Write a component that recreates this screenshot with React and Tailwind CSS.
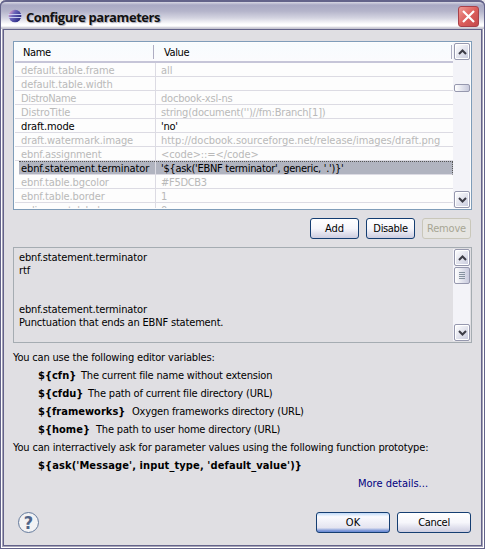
import React from "react";

const rows = [
  ["default.table.frame", "all", "tracking-[-0.1px]"],
  ["default.table.width", "", "tracking-[-0.1px]"],
  ["DistroName", "docbook-xsl-ns", "tracking-[-0.35px]", "tracking-[-0.2px]"],
  ["DistroTitle", "string(document('')//fm:Branch[1])", "tracking-[-0.1px]", "tracking-[-0.2px]"],
  ["draft.mode", "'no'", "tracking-[-0.12px]", "tracking-[-0.3px]", "on"],
  ["draft.watermark.image", "http://docbook.sourceforge.net/release/images/draft.png", "tracking-[-0.1px]", "tracking-[-0.03px]"],
  ["ebnf.assignment", "<code>::=</code>", "tracking-[-0.1px]", "tracking-[-0.1px]"],
  ["ebnf.statement.terminator", "'${ask('EBNF terminator', generic, '.')}'", "tracking-[-0.12px]", "tracking-[-0.29px]", "selected"],
  ["ebnf.table.bgcolor", "#F5DCB3", "tracking-[-0.1px]", "tracking-[-0.3px]"],
  ["ebnf.table.border", "1", "tracking-[-0.1px]"],
  ["eclipse.autolabel", "0", "tracking-[-0.3px]"],
];

const variables = [
  ["${cfn}", "The current file name without extension", "w-[43px]"],
  ["${cfdu}", "The path of current file directory (URL)", "w-[50px]"],
  ["${frameworks}", "Oxygen frameworks directory (URL)", "w-[94px]"],
  ["${home}", "The path to user home directory (URL)", "w-[58px]"],
];

function EclipseIcon() {
  return (
    <svg className="h-[14px] w-[14px]" viewBox="0 0 14 14">
      <defs>
        <linearGradient id="ecl" x1="0" x2="1" y1="0.1" y2="0.7">
          <stop offset="0" stopColor="#f0a8cc" />
          <stop offset="0.4" stopColor="#6a64b8" />
          <stop offset="1" stopColor="#262680" />
        </linearGradient>
      </defs>
      <circle cx="7" cy="7" r="6.3" fill="url(#ecl)" />
      <path d="M0 5.5H14M0 8.5H14" stroke="#c9cdf0" strokeWidth="1" />
    </svg>
  );
}

function ScrollButton({ down }) {
  return (
    <div className="flex h-[17px] w-4 shrink-0 items-center justify-center rounded-[2px] border border-[#9698ae] bg-gradient-to-br from-white to-[#c8cadd] shadow-[inset_0_0_0_1px_#fff]">
      <svg className="h-[6px] w-[9px]" viewBox="0 0 9 6" fill="none" stroke="#3c3c46" strokeWidth="2">
        <path d={down ? "M1 1L4.5 4.5L8 1" : "M1 5L4.5 1.5L8 5"} />
      </svg>
    </div>
  );
}

function Button({ children, className }) {
  return (
    <button className={"flex h-[21px] items-center justify-center rounded-[3px] border " + className}>
      {children}
    </button>
  );
}

const enabled = "border-[#153e72] bg-gradient-to-b from-white via-[#f6f6fb] to-[#cdcde0]";

export default function App() {
  return (
    <div className="h-[549px] w-[485px] overflow-hidden bg-[#e9e7eb] font-['DejaVu_Sans_Condensed','DejaVu_Sans',sans-serif] text-[11px] leading-[13px] text-black [font-stretch:condensed]">
      <div className="flex h-[549px] w-[485px] flex-col rounded-t-[6px] border-x border-b border-[#63638a] bg-[#a6a3b8] shadow-[inset_1px_0_0_#fff,inset_-1px_-1px_0_#fff]">
        <header className="-mx-px flex h-[29px] shrink-0 items-center rounded-t-[6px] border-x border-t-2 border-[#63638a] bg-[linear-gradient(#d8d8e4_0px,#a9a9c4_3px,#b4b4ca_9px,#d4d4e1_16px,#fdfdfe_22px,#fff_24px,#c6c5d0_26px)] pl-[7px] pr-[5px]">
          <EclipseIcon />
          <h1 className="ml-1 mt-[2px] flex-1 whitespace-nowrap font-['Open_Sans',sans-serif] text-[13px] font-bold leading-4 tracking-[-0.43px] text-[#111] [font-stretch:normal] [text-shadow:1px_1px_1px_#a9a9b8]">
            Configure parameters
          </h1>
          <div className="mt-[2px] flex h-[21px] w-[21px] items-center justify-center rounded-[3px] border border-[#a8414a] bg-gradient-to-br from-[#ee9a95] via-[#dc5e5c] to-[#c4494b]">
            <svg className="h-[13px] w-[13px]" viewBox="0 0 13 13" stroke="#fff" strokeWidth="2.2">
              <path d="M1 1L12 12M12 1L1 12" />
            </svg>
          </div>
        </header>

        <main className="mx-[2px] mb-[2px] flex flex-1 flex-col border border-[#63638a] bg-[#e0dfe3]">
          <section className="ml-[9px] mt-[11px] flex h-[169px] w-[459px] shrink-0 border border-[#7f9db9] bg-[#fdfdfd] p-px">
            <div className="h-[165px] flex-1 overflow-hidden">
              <div className="flex h-5 items-center border-b-2 border-[#c6c5d8] bg-gradient-to-b from-[#f7fcfe] to-[#fbfbfd] pr-px tracking-[-0.4px]">
                <div className="w-[139px] border-r border-[#aeadc2] pl-[8px] pt-px">Name</div>
                <div className="flex-1 border-r border-[#aeadc2] pl-[10px] pt-px">Value</div>
              </div>
              {rows.map(([name, value, nameTracking, valueTracking, state]) => {
                const selected = state === "selected";
                return (
                  <div
                    key={name}
                    className={
                      "flex h-[14px] whitespace-nowrap border-b border-b-[#dcdbe3] " +
                      (selected
                        ? "ml-[4px] border-r border-t border-r-[#555] border-t-[#555] bg-[#b1b4c0] [border-right-style:dotted] [border-top-style:dotted]"
                        : state === "on"
                          ? "pt-px"
                          : "pt-px text-[#b9b9b9]")
                    }
                  >
                    <div
                      className={
                        "-mt-px border-r border-[#dcdbe3] pt-px " +
                        (selected ? "w-[137px] pl-[2px] " : "w-[141px] pl-[6px] ") +
                        nameTracking
                      }
                    >
                      {name}
                    </div>
                    <div className={"pl-[5px] " + (valueTracking || "")}>{value}</div>
                  </div>
                );
              })}
            </div>
            <div className="flex w-[17px] shrink-0 flex-col bg-[#f3f3f8] pl-px">
              <ScrollButton />
              <div className="mt-6 h-2 w-4 rounded-[2px] border border-[#9698ae] bg-gradient-to-r from-white to-[#c8cadd]" />
              <div className="flex-1" />
              <ScrollButton down />
            </div>
          </section>

          <div className="ml-[306px] mt-2 flex gap-[7px]">
            <Button className={"w-[49px] tracking-[-0.1px] " + enabled}>Add</Button>
            <Button className={"w-[49px] tracking-[-0.35px] " + enabled}>Disable</Button>
            <Button className="w-[49px] border-[#c9c7ba] bg-[#e6e5e2] tracking-[-0.2px] text-[#a6a594]">Remove</Button>
          </div>

          <section className="ml-[9px] mt-2 flex h-24 w-[459px] shrink-0 border border-[#a5acb2] p-px">
            <div className="flex-1 pl-[4px] pt-[2px] tracking-[-0.13px]">
              <p>ebnf.statement.terminator</p>
              <p>rtf</p>
              <p className="mt-[26px]">ebnf.statement.terminator</p>
              <p className="tracking-[-0.17px]">Punctuation that ends an EBNF statement.</p>
            </div>
            <div className="flex w-[17px] flex-col bg-[#f3f3f8] pl-px">
              <ScrollButton />
              <div className="mt-px flex h-[17px] w-4 flex-col items-center justify-center gap-px rounded-[2px] border border-[#9698ae] bg-gradient-to-r from-white to-[#c8cadd]">
                <i className="h-px w-[6px] bg-[#85929f]" />
                <i className="h-px w-[6px] bg-[#85929f]" />
                <i className="h-px w-[6px] bg-[#85929f]" />
                <i className="h-px w-[6px] bg-[#85929f]" />
              </div>
              <div className="flex-1" />
              <ScrollButton down />
            </div>
          </section>

          <section className="ml-[9px] mt-[6px] whitespace-nowrap leading-[18px] tracking-[-0.18px]">
            <p>You can use the following editor variables:</p>
            {variables.map(([name, text, width]) => (
              <p key={name} className="flex pl-[25px]">
                <b className={"tracking-[0.02px] " + width}>{name}</b>
                <span>{text}</span>
              </p>
            ))}
            <p className="tracking-[-0.16px]">
              You can interractively ask for parameter values using the following function prototype:
            </p>
            <p className="pl-[25px] font-bold tracking-[0.11px]">{"${ask('Message', input_type, 'default_value')}"}</p>
            <p className="pl-[345px] tracking-[0px] text-[#00007f]">More details...</p>
          </section>

          <footer className="ml-[14px] mt-[19px] flex items-center">
            <div className="flex h-[21px] w-[21px] items-center justify-center rounded-full border-[1.5px] border-[#647a9c] bg-[#f2f2f4] text-[18px] font-bold leading-none text-[#4f6488]">?</div>
            <Button className="ml-[277px] w-[74px] border-[#153e72] bg-[linear-gradient(#c0daf8,#fafafe_20%,#e4e4f0_78%,#6f8ed6_95%)]">OK</Button>
            <Button className={"ml-[7px] w-[74px] tracking-[-0.3px] " + enabled}>Cancel</Button>
          </footer>
        </main>
      </div>
    </div>
  );
}
